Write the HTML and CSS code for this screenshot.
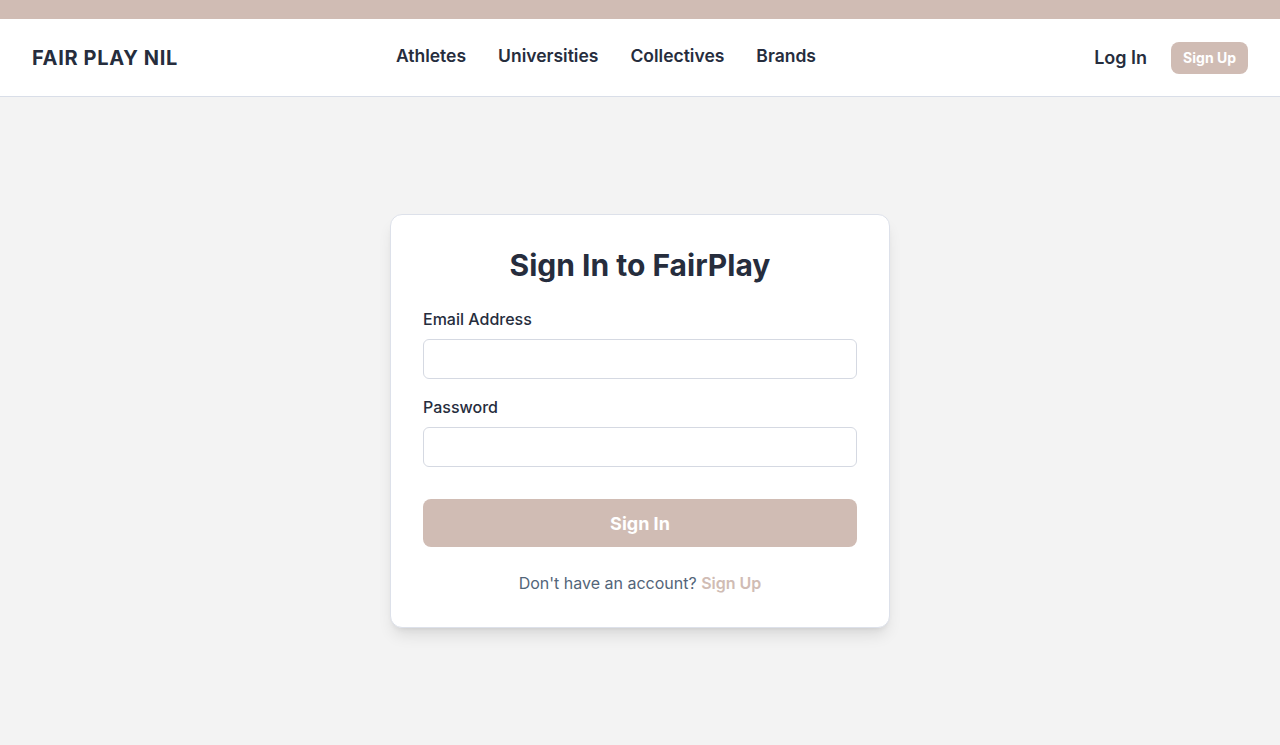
FILE: index.html
```html
<!DOCTYPE html>
<html lang="en">
<head>
<meta charset="utf-8">
<title>Sign In - Fair Play NIL</title>
<link rel="stylesheet" href="styles.css">
</head>
<body>
<div class="topbar"></div>
<header class="header">
  <div class="logo">FAIR PLAY NIL</div>
  <nav class="nav">
    <a href="#">Athletes</a>
    <a href="#">Universities</a>
    <a href="#">Collectives</a>
    <a href="#">Brands</a>
  </nav>
  <div class="auth">
    <a class="login" href="#">Log In</a>
    <a class="signup" href="#">Sign Up</a>
  </div>
</header>
<main class="main">
  <div class="card">
    <h1 class="title">Sign In to FairPlay</h1>
    <form class="form">
      <label class="label" for="email">Email Address</label>
      <input class="input" id="email" type="email">
      <label class="label label-gap" for="password">Password</label>
      <input class="input" id="password" type="password">
      <button class="btn" type="button">Sign In</button>
    </form>
    <p class="footer-text">Don't have an account? <a href="#">Sign Up</a></p>
  </div>
</main>
</body>
</html>
```

FILE: styles.css
```css
* { box-sizing: border-box; }
html, body { margin: 0; padding: 0; }
body {
  font-family: Inter, "Noto Sans", sans-serif;
  background: #f3f3f3;
  color: #262d3d;
  height: 745px;
  overflow: hidden;
  display: flex;
  flex-direction: column;
}
a { text-decoration: none; }
.topbar { height: 19px; background: #d0bcb4; }
.header {
  height: 78px;
  background: #fff;
  border-bottom: 1px solid #d9dee8;
  display: flex;
  align-items: center;
  padding: 0 32px;
}
.logo {
  font-size: 20px;
  font-weight: 700;
  letter-spacing: 0.65px;
  color: #262d3d;
}
.nav {
  display: flex;
  gap: 32px;
  margin-left: 218px;
  margin-top: -5px;
}
.nav a {
  font-size: 17.5px;
  font-weight: 600;
  color: #262d3d;
}
.auth {
  margin-left: auto;
  display: flex;
  align-items: center;
  gap: 24px;
}
.login {
  font-size: 18px;
  font-weight: 600;
  color: #262d3d;
}
.signup {
  background: #d0bcb4;
  color: #fff;
  font-size: 14px;
  font-weight: 700;
  height: 32px;
  padding: 0 12px;
  border-radius: 8px;
  display: flex;
  align-items: center;
}
.main {
  flex: 1;
  display: flex;
  align-items: center;
  justify-content: center;
}
.card {
  width: 500px;
  background: #fff;
  border: 1px solid #dde1ea;
  border-radius: 12px;
  padding: 32px;
  box-shadow: 0 10px 15px -3px rgba(0,0,0,0.1), 0 4px 6px -4px rgba(0,0,0,0.1);
}
.title {
  margin: 0 0 24px;
  font-size: 30px;
  line-height: 36px;
  font-weight: 700;
  text-align: center;
  color: #262d3d;
}
.form { display: flex; flex-direction: column; }
.label {
  font-size: 16px;
  line-height: 24px;
  font-weight: 500;
  color: #262d3d;
  margin-bottom: 8px;
}
.label-gap { margin-top: 16px; }
.input {
  height: 40px;
  border: 1px solid #d5d9e2;
  border-radius: 6px;
  padding: 0 12px;
  font: inherit;
  background: #fff;
}
.btn {
  margin-top: 32px;
  height: 48px;
  border: 0;
  border-radius: 8px;
  background: #d0bcb4;
  color: #fff;
  font-family: inherit;
  font-size: 18px;
  font-weight: 700;
}
.footer-text {
  margin: 24px 0 0;
  text-align: center;
  font-size: 16px;
  line-height: 24px;
  color: #536579;
}
.footer-text a { color: #d0bcb4; font-weight: 600; }
```
